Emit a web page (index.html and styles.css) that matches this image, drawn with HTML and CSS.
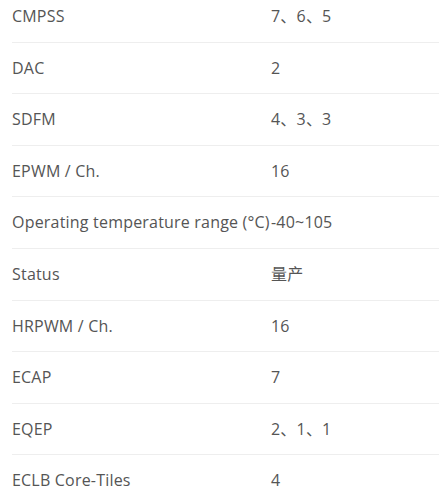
FILE: index.html
```html
<!DOCTYPE html>
<html lang="zh">
<head>
<meta charset="utf-8">
<link rel="stylesheet" href="styles.css">
</head>
<body>
<ul class="params">
  <li class="row"><span class="label">CMPSS</span><span class="value">7、6、5</span></li>
  <li class="row"><span class="label">DAC</span><span class="value">2</span></li>
  <li class="row"><span class="label">SDFM</span><span class="value">4、3、3</span></li>
  <li class="row"><span class="label">EPWM / Ch.</span><span class="value">16</span></li>
  <li class="row"><span class="label">Operating temperature range (°C)</span><span class="value">-40~105</span></li>
  <li class="row"><span class="label">Status</span><span class="value">量产</span></li>
  <li class="row"><span class="label">HRPWM / Ch.</span><span class="value">16</span></li>
  <li class="row"><span class="label">ECAP</span><span class="value">7</span></li>
  <li class="row"><span class="label">EQEP</span><span class="value">2、1、1</span></li>
  <li class="row"><span class="label">ECLB Core-Tiles</span><span class="value">4</span></li>
</ul>
</body>
</html>
```
FILE: styles.css
```css
html, body {
  margin: 0;
  padding: 0;
  background: #fff;
}
.params {
  list-style: none;
  margin: -9px 0 0 0;
  padding: 0 0 0 12px;
  font-family: "Open Sans", "Noto Sans CJK SC", sans-serif;
  font-size: 16px;
  letter-spacing: 0.2px;
  color: #555;
}
.row {
  display: flex;
  align-items: center;
  padding: 14px 0;
  line-height: 22.6px;
  border-bottom: 1px solid #eee;
}
.label {
  flex: 0 0 auto;
  min-width: 259px;
}
.value {
  flex: 0 0 auto;
}
```
